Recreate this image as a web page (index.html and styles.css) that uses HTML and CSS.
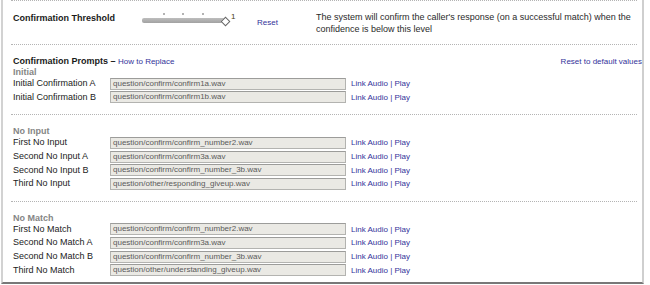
FILE: index.html
```html
<!DOCTYPE html>
<html>
<head>
<meta charset="utf-8">
<link rel="stylesheet" href="styles.css">
</head>
<body>
<div class="panel">
  <div class="sep"></div>
  <div class="threshold">
    <div class="th-label">Confirmation Threshold</div>
    <div class="slider">
      <span class="dot d1"></span><span class="dot d2"></span><span class="dot d3"></span>
      <span class="track"></span>
      <span class="handle"></span>
      <span class="val">1</span>
    </div>
    <a class="link reset">Reset</a>
    <div class="desc">The system will confirm the caller's response (on a successful match) when the confidence is below this level</div>
  </div>
  <div class="sep"></div>

  <div class="prompts-head">
    <div><span class="ph-title">Confirmation Prompts – </span><a class="link">How to Replace</a></div>
    <a class="link">Reset to default values</a>
  </div>
  <div class="group first">
    <div class="group-title">Initial</div>
    <div class="row"><span class="lbl">Initial Confirmation A</span><div class="field">question/confirm/confirm1a.wav</div><span class="links"><a class="link">Link Audio</a> | <a class="link">Play</a></span></div>
    <div class="row"><span class="lbl">Initial Confirmation B</span><div class="field">question/confirm/confirm1b.wav</div><span class="links"><a class="link">Link Audio</a> | <a class="link">Play</a></span></div>
  </div>
  <div class="sep gap"></div>

  <div class="group">
    <div class="group-title">No Input</div>
    <div class="row"><span class="lbl">First No Input</span><div class="field">question/confirm/confirm_number2.wav</div><span class="links"><a class="link">Link Audio</a> | <a class="link">Play</a></span></div>
    <div class="row"><span class="lbl">Second No Input A</span><div class="field">question/confirm/confirm3a.wav</div><span class="links"><a class="link">Link Audio</a> | <a class="link">Play</a></span></div>
    <div class="row"><span class="lbl">Second No Input B</span><div class="field">question/confirm/confirm_number_3b.wav</div><span class="links"><a class="link">Link Audio</a> | <a class="link">Play</a></span></div>
    <div class="row"><span class="lbl">Third No Input</span><div class="field">question/other/responding_giveup.wav</div><span class="links"><a class="link">Link Audio</a> | <a class="link">Play</a></span></div>
  </div>
  <div class="sep gap"></div>

  <div class="group">
    <div class="group-title">No Match</div>
    <div class="row"><span class="lbl">First No Match</span><div class="field">question/confirm/confirm_number2.wav</div><span class="links"><a class="link">Link Audio</a> | <a class="link">Play</a></span></div>
    <div class="row"><span class="lbl">Second No Match A</span><div class="field">question/confirm/confirm3a.wav</div><span class="links"><a class="link">Link Audio</a> | <a class="link">Play</a></span></div>
    <div class="row"><span class="lbl">Second No Match B</span><div class="field">question/confirm/confirm_number_3b.wav</div><span class="links"><a class="link">Link Audio</a> | <a class="link">Play</a></span></div>
    <div class="row"><span class="lbl">Third No Match</span><div class="field">question/other/understanding_giveup.wav</div><span class="links"><a class="link">Link Audio</a> | <a class="link">Play</a></span></div>
  </div>
</div>
</body>
</html>
```
FILE: styles.css
```css
html, body {
  margin: 0;
  padding: 0;
  background: #fff;
}
body {
  font-family: "Liberation Sans", Arial, sans-serif;
  font-size: 9px;
  color: #222;
}
.panel {
  margin-left: 1px;
  width: 643px;
  box-sizing: border-box;
  border-left: 2px solid #d2d2d2;
  border-right: 2px solid #cfcfcf;
  border-bottom: 2px solid #787878;
  padding: 0 0 5.5px 10px;
}
.sep {
  height: 0;
  border-top: 1px dotted #b4b4b4;
  margin: 0 5px 0 -2px;
}
.sep.gap {
  margin-top: 10px;
}
.threshold {
  display: flex;
  align-items: flex-start;
  padding: 10px 0 9px;
}
.th-label {
  width: 129px;
  font-weight: bold;
  line-height: 12px;
  margin-top: 1px;
  color: #1a1a1a;
}
.slider {
  position: relative;
  width: 95px;
  height: 16px;
}
.dot {
  position: absolute;
  top: 2px;
  width: 2px;
  height: 2px;
  border-radius: 1px;
  background: #9a9a9a;
}
.d1 { left: 21px; }
.d2 { left: 40px; }
.d3 { left: 60px; }
.track {
  position: absolute;
  left: 0;
  top: 7px;
  width: 82px;
  height: 5px;
  border-radius: 2px 0 0 2px;
  background: linear-gradient(#bdbdbd, #a2a2a2);
}
.handle {
  position: absolute;
  left: 80px;
  top: 7px;
  width: 5px;
  height: 5px;
  background: #fff;
  border: 1px solid #666;
  transform: rotate(45deg);
}
.val {
  position: absolute;
  left: 89px;
  top: 1px;
  font-size: 8px;
  line-height: 10px;
  color: #4a3d10;
}
.link {
  color: #33339a;
  font-size: 8px;
  text-decoration: none;
}
.reset {
  margin-left: 20px;
  margin-top: 7px;
  line-height: 10px;
  width: 21px;
}
.desc {
  margin-left: 38px;
  width: 322px;
  line-height: 12px;
  color: #2a2a2a;
}
.prompts-head {
  display: flex;
  justify-content: space-between;
  align-items: baseline;
  padding-top: 11px;
  line-height: 10px;
}
.ph-title {
  font-weight: bold;
  color: #1a1a1a;
}
.group {
  padding-top: 11px;
}
.group.first {
  padding-top: 0;
}
.group-title {
  font-weight: bold;
  color: #858585;
  line-height: 10px;
}
.row {
  display: grid;
  grid-template-columns: 97px 236px auto;
  align-items: center;
  height: 13.6px;
}
.lbl {
  line-height: 13px;
  color: #222;
  white-space: nowrap;
}
.field {
  box-sizing: border-box;
  height: 12px;
  line-height: 10px;
  font-size: 8px;
  padding-left: 2px;
  background: #eae9e4;
  border: 1px solid #b3b3b0;
  border-top-color: #9c9c9a;
  color: #5a5a5a;
  white-space: nowrap;
  overflow: hidden;
}
.links {
  margin-left: 5px;
  font-size: 8px;
  color: #33339a;
  white-space: nowrap;
}
```
